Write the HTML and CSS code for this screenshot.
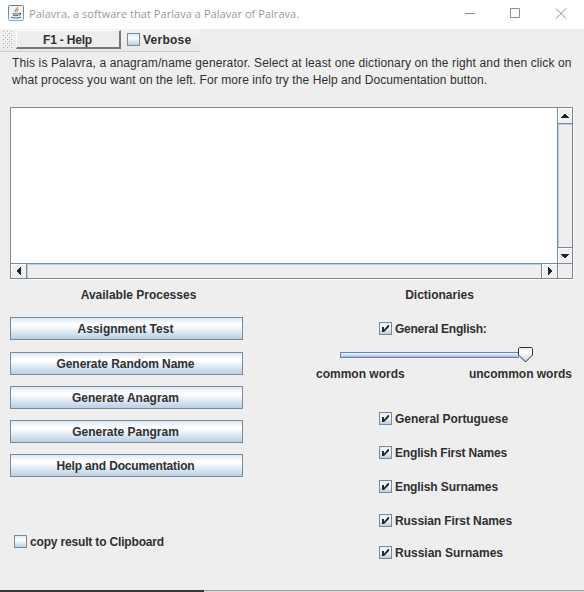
FILE: index.html
```
<!DOCTYPE html>
<html lang="en">
<head>
<meta charset="utf-8">
<title>Palavra</title>
<link rel="stylesheet" href="styles.css">
</head>
<body>
<svg class="defs" width="0" height="0">
  <symbol id="tick" viewBox="0 0 13 13"><path d="M3 5h2v2.400L9 3h1v2L5 10H3z" fill="#222831"/></symbol>
</svg>
<div class="window">
  <header class="titlebar">
    <svg class="app-icon" width="16" height="16" viewBox="0 0 16 16">
      <defs><linearGradient id="cup" x2="0" y2="1"><stop offset="0" stop-color="#5b7d9b"/><stop offset="1" stop-color="#8ca5b8"/></linearGradient></defs>
      <rect x=".5" y=".5" width="15" height="15" rx="1" fill="#f3f6f9" stroke="url(#cup)"/>
      <path d="M9.500 2c.5 2-3 2.600-2.500 4.200.2.500.9.900.8 1.400M10.600 4.200c-1.600.8-2.200 1.500-1.300 2.700" fill="none" stroke="#e8853a" stroke-width="1.200"/>
      <path d="M4.500 8.500c2 .7 4.500.6 6.500 0M5 10.300c2 .6 4 .5 5.500 0M3 12c1 1.300 8 1.300 10 0M11 8.300c2-.6 2.400 1.200.2 2" fill="none" stroke="#4a6f8f" stroke-width="1.100"/>
    </svg>
    <span class="title">Palavra, a software that Parlava a Palavar of Palrava.</span>
    <svg class="controls" width="102" height="12" viewBox="0 0 102 12" fill="none" stroke="#8c8c8c">
      <path d="M0 5.500h10M45.500.5h9v9h-9zM91 .5l10 10M101 .5l-10 10"/>
    </svg>
  </header>

  <div class="toolbar">
    <svg class="grip" width="10" height="18">
      <defs><pattern id="dots" width="4" height="4" patternUnits="userSpaceOnUse"><path d="M0 0h1v1H0zM2 2h1v1H2z" fill="#a3adb8"/><path d="M1 1h1v1H1zM3 3h1v1H3z" fill="#fff"/></pattern></defs>
      <rect width="10" height="18" fill="url(#dots)"/>
    </svg>
    <button class="help ls-help">F1 - Help</button>
    <label class="check"><span class="box"></span><span class="ls-verbose">Verbose</span></label>
  </div>

  <p class="intro"><span class="intro-a">This is Palavra, a anagram/name generator. Select at least one dictionary on the right and then click on</span><br><span class="intro-b">what process you want on the left. For more info try the Help and Documentation button.</span></p>

  <div class="output">
    <div class="page"></div>
    <div class="vbar">
      <span class="arrow"><svg width="8" height="4"><path d="M3 0h2v1h1v1h1v1h1v1H0V3h1V2h1V1h1z"/></svg></span>
      <span class="track"></span>
      <span class="arrow"><svg width="8" height="4"><path d="M0 0h8v1H7v1H6v1H5v1H3V3H2V2H1V1H0z"/></svg></span>
    </div>
    <div class="hbar">
      <span class="arrow"><svg width="4" height="8"><path d="M4 0v8H3V7H2V6H1V5H0V3h1V2h1V1h1V0z"/></svg></span>
      <span class="track"></span>
      <span class="arrow"><svg width="4" height="8"><path d="M0 0h1v1h1v1h1v1h1v2H3v1H2v1H1v1H0z"/></svg></span>
    </div>
    <div class="corner"></div>
  </div>

  <main class="columns">
    <section class="processes">
      <h2>Available Processes</h2>
      <button>Assignment Test</button>
      <button class="ls-name">Generate Random Name</button>
      <button>Generate Anagram</button>
      <button>Generate Pangram</button>
      <button class="ls-doc">Help and Documentation</button>
      <label class="check clipboard"><span class="box"></span><span class="ls-clip">copy result to Clipboard</span></label>
    </section>

    <section class="dictionaries">
      <h2>Dictionaries</h2>
      <label class="check"><span class="box"><svg><use href="#tick"/></svg></span><span class="ls-ge">General English:</span></label>
      <div class="slider">
        <div class="rail"></div>
        <svg class="thumb" width="15" height="16" viewBox="0 0 15 16">
          <defs><linearGradient id="knob" x2="0" y2="1"><stop offset="0" stop-color="#dfe9f5"/><stop offset=".35" stop-color="#fff"/><stop offset="1" stop-color="#bccfe6"/></linearGradient></defs>
          <path d="M1.500.5h12l1 1v6.500l-7 7-7-7V1.500z" fill="url(#knob)" stroke="#2b303a"/>
        </svg>
      </div>
      <div class="range"><span>common words</span><span class="ls-un">uncommon words</span></div>
      <div class="list">
        <label class="check"><span class="box"><svg><use href="#tick"/></svg></span><span class="ls-gp">General Portuguese</span></label>
        <label class="check"><span class="box"><svg><use href="#tick"/></svg></span><span class="ls-ef">English First Names</span></label>
        <label class="check"><span class="box"><svg><use href="#tick"/></svg></span><span class="ls-es">English Surnames</span></label>
        <label class="check"><span class="box"><svg><use href="#tick"/></svg></span><span class="ls-rf">Russian First Names</span></label>
        <label class="check last"><span class="box"><svg><use href="#tick"/></svg></span><span>Russian Surnames</span></label>
      </div>
    </section>
  </main>
  <footer class="edge"><span class="edge-dark"></span></footer>
</div>
</body>
</html>
```
FILE: styles.css
```
* { box-sizing: border-box; }
body { margin: 0; }
svg { display: block; }
.defs { position: absolute; }
.window {
  display: flex;
  flex-direction: column;
  width: 584px;
  height: 592px;
  overflow: hidden;
  background: #eee;
  color: #303030;
  font: bold 12px/14px "Liberation Sans", sans-serif;
  white-space: nowrap;
}

.titlebar {
  display: flex;
  flex: none;
  height: 29px;
  padding: 5px 17px 0 8px;
  background: #fff;
}
.title {
  margin-left: 5px;
  color: #999;
  font: 11px/18px "Open Sans", sans-serif;
  letter-spacing: .05px;
}
.controls { margin: 3px 0 0 auto; }

.toolbar {
  display: flex;
  flex: none;
  width: 200px;
  height: 23px;
  padding-top: 1px;
  border-bottom: 1px solid #ccc;
  background: linear-gradient(#f3f3f3, #e9e9e9);
}
.grip { margin: 1px 0 0 3px; }
.help {
  width: 105px;
  height: 19px;
  margin-left: 3px;
  padding: 1px 1px 0 0;
  border: solid;
  border-width: 1px 2px 2px 1px;
  border-color: #fff #777 #777 #fff;
  background: #ededed;
  color: inherit;
  font: inherit;
}
.check { display: flex; height: 13px; gap: 3px; }
.check > span:last-child { line-height: 15px; }
.toolbar .check { margin: 3px 0 0 6px; }
.box {
  width: 13px;
  height: 13px;
  border: 1px solid #7a8a99;
  background: linear-gradient(#dfe9f5, #fff 35%, #b8cfe5);
}
.box svg { width: 13px; height: 13px; margin: -1px; }

.intro {
  margin: 3px 0 0 12px;
  font-weight: normal;
  line-height: 17px;
}
.intro-a { letter-spacing: .122px; }
.intro-b { letter-spacing: .08px; }

.output {
  display: grid;
  flex: none;
  grid-template: 155px 15px / 546px 15px;
  width: 563px;
  height: 172px;
  margin: 18px 0 0 10px;
  border: 1px solid #7a8a99;
  box-shadow: 1px 1px #fff;
}
.page { background: #fff; }
.vbar, .hbar { display: flex; }
.vbar { flex-direction: column; border-left: 1px solid #7a8a99; }
.hbar { border-top: 1px solid #7a8a99; }
.arrow {
  display: grid;
  place-items: center;
  flex: none;
  background: #f0f0f0;
  box-shadow: inset 1px 1px #fff;
}
.arrow path { fill: #222; }
.vbar .arrow { height: 15px; }
.hbar .arrow { width: 15px; }
.track { flex: 1; }
.vbar .track { border: solid #7a8a99; border-width: 1px 0; box-shadow: inset 1px 1px #b8cfe5; }
.hbar .track { border: solid #7a8a99; border-width: 0 1px; box-shadow: inset 1px 1px #b8cfe5; }
.corner { border: solid #7a8a99; border-width: 1px 0 0 1px; }

.columns { display: flex; flex: 1; }
.processes { display: flex; flex-direction: column; width: 233px; margin-left: 10px; }
h2 { margin: 9px 0 0; font: inherit; text-align: center; }
.processes h2 { margin: 9px 0 15px 24px; }
.processes button {
  flex: none;
  height: 23px;
  margin-bottom: 11px;
  padding: 0 2px 0 0;
  border: 1px solid #7a8a99;
  background: linear-gradient(#dde8f3, #fff 30%, #fff 35%, #b8cfe5);
  color: inherit;
  font: inherit;
}
.processes h2 + button { margin-bottom: 12px; }
.clipboard { margin: 47px 0 0 4px; }

.dictionaries { width: 256px; margin-left: 73px; }
.dictionaries h2 { margin-right: 9px; margin-bottom: 20px; }
.dictionaries .check { margin-left: 63px; }
.slider { display: flex; align-items: center; height: 16px; margin: 12px 0 0 24px; }
.rail {
  width: 179px;
  height: 6px;
  border: 1px solid #6382bf;
  border-right: 0;
  background: linear-gradient(#e4edf8 25%, #a3b8e0);
}
.thumb { margin-left: -1px; }
.range { display: flex; justify-content: space-between; margin-top: 4px; }
.list { display: grid; gap: 21px; margin-top: 31px; }
.list .last { margin-top: -2px; }

.edge { flex: none; height: 2px; border-top: 1px solid #a0a0a0; background: #d8d8d8; }
.edge-dark { display: block; width: 204px; height: 2px; margin-top: -1px; background: #383436; }

.processes .ls-name { letter-spacing: -.07px; }
.processes .ls-doc { letter-spacing: -.152px; }
.ls-help { letter-spacing: -.186px; }
.ls-verbose { letter-spacing: .25px; }
.ls-ge { letter-spacing: -.24px; }
.ls-un { letter-spacing: -.025px; }
.ls-gp { letter-spacing: -.058px; }
.ls-ef { letter-spacing: -.178px; }
.ls-es { letter-spacing: -.106px; }
.ls-rf { letter-spacing: -.09px; }
.ls-clip { letter-spacing: -.167px; }
```
